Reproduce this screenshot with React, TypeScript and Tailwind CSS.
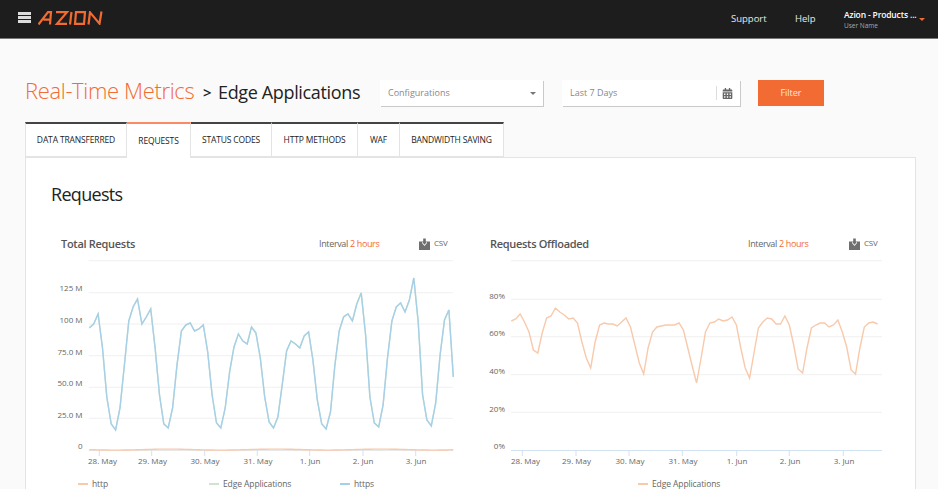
import { FaCalendarAlt } from "react-icons/fa";

const tabs = [
  { label: "DATA TRANSFERRED", width: "w-[102px]" },
  { label: "REQUESTS", width: "w-[64px]", active: true },
  { label: "STATUS CODES", width: "w-[81px]" },
  { label: "HTTP METHODS", width: "w-[86px]" },
  { label: "WAF", width: "w-[42px]" },
  { label: "BANDWIDTH SAVING", width: "w-[104px]" },
];

// y values per 2 hour step, read off the plots
const httpsY = [
  328, 324, 314, 348, 397, 424, 430, 408, 365, 321, 307, 299, 324, 317, 309, 348, 395, 424, 428, 408, 365, 331, 325,
  323, 331, 329, 325, 352, 395, 423, 428, 408, 372, 347, 334, 341, 344, 327, 333, 358, 397, 422, 428, 417, 385,
  351, 341, 344, 348, 336, 332, 360, 400, 424, 429, 412, 365, 331, 317, 314, 321, 304, 293, 335, 397, 423, 427, 405,
  358, 321, 307, 303, 312, 300, 278, 322, 395, 420, 426, 403, 355, 320, 310, 377,
];
const offloadY = [
  321, 319, 314, 322, 332, 350, 353, 333, 318, 316, 308, 312, 315, 319, 318, 323, 342, 358, 368, 342, 325, 323, 324,
  324, 326, 322, 318, 327, 345, 363, 374, 348, 332, 327, 326, 325, 325, 325, 323, 330, 348, 366, 383, 358, 332, 323,
  322, 319, 321, 320, 317, 325, 348, 368, 378, 353, 328, 322, 318, 319, 324, 324, 316, 325, 345, 369, 373, 348, 328,
  325, 323, 323, 327, 325, 320, 332, 347, 370, 374, 348, 327, 323, 322, 324,
];
const httpY = httpsY.map((_, i) => 449.6 + Math.sin(i * 0.26) * 0.5);

const toPoints = (ys: number[], x0: number, step: number) =>
  ys.map((y, i) => `${(x0 + i * step).toFixed(1)},${y}`).join(" ");

function Logo() {
  return (
    <svg width="66" height="14" viewBox="0 0 66 14" fill="none" stroke="#f26b33" strokeWidth="2.2" className="ml-[7px]">
      <path d="M0.5 13.5 L10 1.2 H13 L12 13.5 M5.5 8.6 H12.5" />
      <path d="M18 1.2 H29 L19 12.8 H29" />
      <path d="M33.5 1 L32 13.5" />
      <path d="M38 1.2 H47 L46 12.8 H37 Z" />
      <path d="M50.5 13.5 L52 1.4 L61.5 12.6 L63.5 0.5" />
    </svg>
  );
}

function CsvIcon() {
  return (
    <svg width="11" height="12" viewBox="0 0 11 12">
      <path d="M0 3.5 H3 V5 L5.5 8 L8 5 V3.5 H11 V12 H0 Z" fill="#6f6f6f" />
      <path d="M4.2 0.5 H6.8 V3.6 H8.2 L5.5 6.8 L2.8 3.6 H4.2 Z" fill="#6f6f6f" />
    </svg>
  );
}

function ChartHead({ title, intervalGap }: { title: string; intervalGap: string }) {
  return (
    <div className="flex h-[24px] items-center text-[#666]">
      <span className="w-[258px] text-[11px] font-semibold tracking-[-0.3px] text-[#555]">{title}</span>
      <span className="w-[60px] whitespace-nowrap text-[9px] tracking-[-0.35px]">
        Interval <span className="text-[#f26b33]">2 hours</span>
      </span>
      <span className={`flex items-center gap-[4px] ${intervalGap}`}>
        <CsvIcon />
        <span className="-mt-[3px] text-[8px] tracking-[-0.2px]">CSV</span>
      </span>
    </div>
  );
}

function Plot({
  x,
  grid,
  yLabels,
  ticks,
  xLabels,
  baseline,
  children,
}: {
  x: number;
  grid: number[];
  yLabels: [string, number][];
  ticks: number[];
  xLabels: [string, number][];
  baseline: string;
  children: React.ReactNode;
}) {
  return (
    <svg width="392" height="212" viewBox={`${x} 256 392 212`} className="block overflow-visible font-['Open_Sans',sans-serif]">
      {grid.map((y) => (
        <line key={y} x1={x === 61 ? 88.7 : 511} x2={x + 392} y1={y} y2={y} stroke="#f0f0f0" />
      ))}
      <line x1={x === 61 ? 88.7 : 511} x2={x + 392} y1="450.5" y2="450.5" stroke={baseline} />
      {ticks.map((t) => (
        <line key={t} x1={t} x2={t} y1="450" y2="456" stroke="#d3e2f0" />
      ))}
      {yLabels.map(([label, y]) => (
        <text key={label} x={x === 61 ? 82.5 : 505} y={y + 3} textAnchor="end" fontSize="8" fill="#666">
          {label}
        </text>
      ))}
      {xLabels.map(([label, cx]) => (
        <text key={label} x={cx} y={464} textAnchor="middle" fontSize="8" fill="#666">
          {label}
        </text>
      ))}
      {children}
    </svg>
  );
}

function Legend({ color, label, className }: { color: string; label: string; className?: string }) {
  return (
    <span className={`flex items-center gap-[4px] text-[8.5px] tracking-[-0.1px] text-[#666] ${className ?? ""}`}>
      <span className="h-[1.5px] w-[10px]" style={{ background: color }} />
      {label}
    </span>
  );
}

export default function App() {
  return (
    <div className="h-[489px] w-[938px] overflow-hidden bg-[#fafafa] font-['Open_Sans',sans-serif]">
      {/* Header */}
      <header className="flex h-[39px] items-center border-b border-[#77777a] bg-[#1d1d1d] pl-[18px]">
        <div className="flex items-center pb-[3px]">
          <div className="flex w-[13px] flex-col gap-[1.5px]">
            <div className="h-[2.5px] bg-[#ddd]" />
            <div className="h-[2.5px] bg-[#ddd]" />
            <div className="h-[2.5px] bg-[#ddd]" />
          </div>
          <Logo />
        </div>
        <div className="ml-auto flex items-center text-white">
          <span className="w-[64px] text-[9.5px] text-[#e8e8e8]">Support</span>
          <span className="w-[49px] text-[9.5px] text-[#e8e8e8]">Help</span>
          <div className="mt-[2px] w-[75px] whitespace-nowrap leading-none">
            <div className="text-[8.5px] font-semibold tracking-[-0.15px]">Azion - Products ...</div>
            <div className="mt-[3px] text-[6.5px] text-[#aaa]">User Name</div>
          </div>
          <span className="mr-[13px] mt-[1px] h-0 w-0 border-x-[3px] border-t-[3px] border-x-transparent border-t-[#f26b33]" />
        </div>
      </header>

      <main className="px-[25px]">
        {/* Title and filters */}
        <div className="flex h-[83px] items-center pt-[25px]">
          <h1 className="-mt-[6px] w-[169px] whitespace-nowrap text-[22px] font-light leading-none tracking-[-0.35px] text-[#f26b33]">
            Real-Time Metrics
          </h1>
          <span className="-mt-[2px] ml-[9px] w-[7px] text-[15px] font-semibold leading-none text-[#222]">&gt;</span>
          <span className="-mt-[2px] ml-[8px] w-[162px] whitespace-nowrap text-[18px] leading-none tracking-[-0.35px] text-[#222]">
            Edge Applications
          </span>
          <div className="flex h-[26px] w-[163px] items-center justify-between bg-white pl-[8px] pr-[7px] text-[9px] text-[#888] shadow-[1px_1px_0_#c9c9c9]">
            Configurations
            <span className="h-0 w-0 border-x-[3px] border-t-[3px] border-x-transparent border-t-[#777]" />
          </div>
          <div className="ml-[19px] flex h-[26px] w-[178px] items-center bg-white pl-[8px] text-[9px] text-[#888] shadow-[1px_1px_0_#c9c9c9]">
            Last 7 Days
            <span className="ml-auto mr-[7px] flex h-[14px] items-center border-l border-[#ddd] pl-[5px]">
              <FaCalendarAlt className="text-[11px] text-[#666]" />
            </span>
          </div>
          <button className="ml-[18px] h-[26px] w-[66px] bg-[#f26b33] text-[9px] text-[#ffe6da]">Filter</button>
        </div>

        {/* Tabs */}
        <div className="flex">
          {tabs.map((t) => (
            <div
              key={t.label}
              className={`relative z-10 flex h-[35px] items-center justify-center whitespace-nowrap border-r border-[#e4e4e4] bg-white text-[8.5px] font-medium tracking-[-0.15px] text-[#222] first:border-l ${t.width} ${
                t.active ? "border-t-2 border-t-[#f98a63] h-[36px] -mb-px" : "border-t-2 border-t-[#444] border-b"
              }`}
            >
              {t.label}
            </div>
          ))}
        </div>

        {/* Card */}
        <section className="h-[340px] w-[891px] border border-[#e4e4e4] bg-white pl-[25px]">
          <h2 className="pt-[21px] text-[18px] leading-[30px] tracking-[-0.7px] text-[#222]">Requests</h2>
          <div className="mt-[23px] grid w-[831px] grid-cols-[392px_392px] gap-x-[37px] pl-[10px]">
            <div>
              <ChartHead title="Total Requests" intervalGap="ml-[40px]" />
              <Plot
                x={61}
                grid={[260.7, 292.7, 324, 355.7, 387.3, 418.3]}
                baseline="#e8e8e8"
                yLabels={[["125 M", 288.3], ["100 M", 320], ["75.0 M", 352], ["50.0 M", 383], ["25.0 M", 415], ["0", 446]]}
                ticks={[99.3, 151.7, 204.7, 257.3, 309.7, 363, 415.7]}
                xLabels={[["28. May", 102.5], ["29. May", 152.5], ["30. May", 205], ["31. May", 258], ["1. Jun", 310], ["2. Jun", 363], ["3. Jun", 416]]}
              >
                <polyline points={toPoints(httpsY, 89.3, 4.385)} fill="none" stroke="#cfe3cf" strokeWidth="1.4" transform="translate(0,-0.2)" />
                <polyline points={toPoints(httpsY, 89.3, 4.385)} fill="none" stroke="#a5d0e8" strokeWidth="1.4" />
                <polyline points={toPoints(httpY, 89.3, 4.385)} fill="none" stroke="#f8c9ab" strokeWidth="1.4" />
              </Plot>
              <div className="flex h-[32px] items-center pl-[17px]">
                <Legend color="#f8c9ab" label="http" className="w-[131px]" />
                <Legend color="#cfe3cf" label="Edge Applications" className="w-[131px]" />
                <Legend color="#a5d0e8" label="https" />
              </div>
            </div>
            <div>
              <ChartHead title="Requests Offloaded" intervalGap="ml-[41px]" />
              <Plot
                x={490}
                grid={[260.7, 299.3, 336.7, 374.7, 412.3]}
                baseline="#d3e2f0"
                yLabels={[["80%", 295.7], ["60%", 333], ["40%", 371], ["20%", 408.7], ["0%", 446]]}
                ticks={[522.3, 576, 629, 682.3, 736.7, 789.3, 843.3]}
                xLabels={[["28. May", 525.5], ["29. May", 576.5], ["30. May", 630], ["31. May", 683], ["1. Jun", 737], ["2. Jun", 790], ["3. Jun", 844]]}
              >
                <polyline points={toPoints(offloadY, 511.3, 4.413)} fill="none" stroke="#f8c9ab" strokeWidth="1.4" />
              </Plot>
              <div className="flex h-[32px] items-center pl-[148px]">
                <Legend color="#f8c9ab" label="Edge Applications" />
              </div>
            </div>
          </div>
        </section>
      </main>
    </div>
  );
}
